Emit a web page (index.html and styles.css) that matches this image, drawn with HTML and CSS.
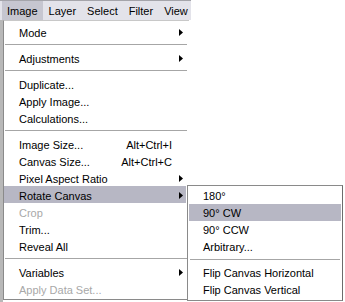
FILE: index.html
```html
<!DOCTYPE html>
<html>
<head>
<meta charset="utf-8">
<link rel="stylesheet" href="styles.css">
</head>
<body>
<div class="screen">
  <div class="menubar">
    <span class="bar-item active">Image</span>
    <span class="bar-item">Layer</span>
    <span class="bar-item">Select</span>
    <span class="bar-item">Filter</span>
    <span class="bar-item">View</span>
  </div>
  <div class="main-row">
    <div class="edge"></div>
    <div class="menu">
      <div class="item"><span class="label">Mode</span><span class="key"></span><span class="arrow-slot"><svg width="4" height="7" viewBox="0 0 4 7"><polygon points="0,0 4,3.5 0,7" fill="#000"/></svg></span></div>
      <div class="sep"></div>
      <div class="item"><span class="label">Adjustments</span><span class="key"></span><span class="arrow-slot"><svg width="4" height="7" viewBox="0 0 4 7"><polygon points="0,0 4,3.5 0,7" fill="#000"/></svg></span></div>
      <div class="sep"></div>
      <div class="item"><span class="label">Duplicate...</span><span class="key"></span><span class="arrow-slot"></span></div>
      <div class="item"><span class="label">Apply Image...</span><span class="key"></span><span class="arrow-slot"></span></div>
      <div class="item"><span class="label">Calculations...</span><span class="key"></span><span class="arrow-slot"></span></div>
      <div class="sep"></div>
      <div class="item"><span class="label">Image Size...</span><span class="key">Alt+Ctrl+I</span><span class="arrow-slot"></span></div>
      <div class="item"><span class="label">Canvas Size...</span><span class="key">Alt+Ctrl+C</span><span class="arrow-slot"></span></div>
      <div class="item"><span class="label">Pixel Aspect Ratio</span><span class="key"></span><span class="arrow-slot"><svg width="4" height="7" viewBox="0 0 4 7"><polygon points="0,0 4,3.5 0,7" fill="#000"/></svg></span></div>
      <div class="item hot"><span class="label">Rotate Canvas</span><span class="key"></span><span class="arrow-slot"><svg width="4" height="7" viewBox="0 0 4 7"><polygon points="0,0 4,3.5 0,7" fill="#000"/></svg></span></div>
      <div class="item disabled"><span class="label">Crop</span><span class="key"></span><span class="arrow-slot"></span></div>
      <div class="item"><span class="label">Trim...</span><span class="key"></span><span class="arrow-slot"></span></div>
      <div class="item"><span class="label">Reveal All</span><span class="key"></span><span class="arrow-slot"></span></div>
      <div class="sep"></div>
      <div class="item"><span class="label">Variables</span><span class="key"></span><span class="arrow-slot"><svg width="4" height="7" viewBox="0 0 4 7"><polygon points="0,0 4,3.5 0,7" fill="#000"/></svg></span></div>
      <div class="item disabled"><span class="label">Apply Data Set...</span><span class="key"></span><span class="arrow-slot"></span></div>
    </div>
  </div>
  <div class="submenu">
    <div class="sub-item">180°</div>
    <div class="sub-item hot">90° CW</div>
    <div class="sub-item">90° CCW</div>
    <div class="sub-item">Arbitrary...</div>
    <div class="sub-sep"></div>
    <div class="sub-item">Flip Canvas Horizontal</div>
    <div class="sub-item">Flip Canvas Vertical</div>
  </div>
</div>
</body>
</html>
```
FILE: styles.css
```css
html, body {
  margin: 0;
  padding: 0;
  background: #ffffff;
}

.screen {
  position: relative;
  width: 345px;
  height: 302px;
  overflow: hidden;
  font-family: "Liberation Sans", Arial, sans-serif;
  font-size: 11px;
  color: #000;
  background: #ffffff;
}

.menubar {
  width: 191px;
  height: 20px;
  box-sizing: border-box;
  border-top: 1px solid #a4a4aa;
  background: #e3e3ea;
  display: flex;
  align-items: stretch;
  padding-left: 2px;
  gap: 1px;
}

.bar-item {
  display: flex;
  align-items: center;
  padding: 0 5px 0 5px;
}

.bar-item.active {
  background: #c6c6d0;
}

.main-row {
  display: flex;
  height: 282px;
}

.edge {
  width: 3px;
  background: #b8b8b8;
}

.menu {
  width: 186px;
  height: 280px;
  box-sizing: border-box;
  border-left: 1px solid #8a8a8a;
  border-bottom: 1px solid #8a8a8a;
  border-top: 1px solid #c8c8c8;
  padding-top: 2px;
  background: #ffffff;
  display: flex;
  flex-direction: column;
}

.item {
  height: 17px;
  box-sizing: border-box;
  display: flex;
  align-items: center;
  padding-top: 2px;
  padding-left: 15px;
  padding-right: 6px;
}

.item .label {
  flex: 1;
  white-space: nowrap;
}

.item .key {
  white-space: nowrap;
  text-align: right;
}

.arrow-slot {
  width: 11px;
  display: flex;
  justify-content: flex-end;
  align-items: center;
  margin-top: -1px;
}

.item.hot {
  background: #b7b7c4;
  margin-right: 3px;
  padding-right: 3px;
}

.item.disabled {
  color: #a8a8a8;
}

.sep {
  height: 9px;
  display: flex;
  align-items: center;
  padding: 0 2px 0 1px;
  box-sizing: border-box;
}

.sep::before {
  content: "";
  display: block;
  width: 100%;
  height: 1px;
  background: #a6a6a6;
}

.submenu {
  position: absolute;
  left: 187px;
  top: 185px;
  width: 156px;
  height: 116px;
  box-sizing: border-box;
  border: 1px solid #8a8a8a;
  border-right-color: #6c6c6c;
  padding: 1px;
  background: #ffffff;
}

.sub-item {
  height: 17px;
  box-sizing: border-box;
  display: flex;
  align-items: center;
  padding-top: 1px;
  padding-left: 14px;
  white-space: nowrap;
}

.sub-item.hot {
  background: #b7b7c4;
}

.sub-sep {
  height: 9px;
  display: flex;
  align-items: center;
  padding: 0 1px;
}

.sub-sep::before {
  content: "";
  display: block;
  width: 100%;
  height: 1px;
  background: #a6a6a6;
}
```
